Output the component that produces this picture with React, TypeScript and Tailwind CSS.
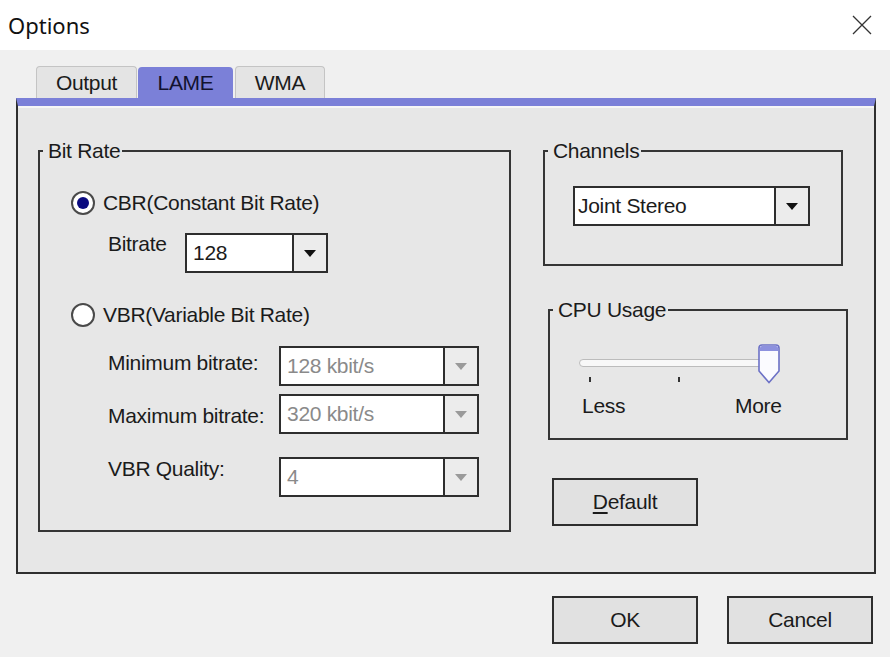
import React from 'react';

const Arrow: React.FC<{ disabled?: boolean }> = ({ disabled }) => (
  <svg width="12" height="7" viewBox="0 0 12 7">
    <path d="M0 0 H12 L6 7 Z" fill={disabled ? '#9a9a9a' : '#111'} />
  </svg>
);

interface ComboProps {
  value: string;
  className: string;
  textClass?: string;
  disabled?: boolean;
}

const Combo: React.FC<ComboProps> = ({ value, className, textClass, disabled }) => (
  <div className={`flex h-[40px] border-2 border-[#2e2e2e] bg-white ${className}`}>
    <span className={`flex-1 flex items-center ${textClass || 'pl-[6px]'} ${disabled ? 'text-[#8a8a8a]' : 'text-[#1b1b1b]'}`}>
      {value}
    </span>
    <div className="w-[34px] border-l-2 border-[#2e2e2e] bg-[#ececec] flex items-center justify-center">
      <Arrow disabled={disabled} />
    </div>
  </div>
);

const Radio: React.FC<{ checked?: boolean; label: string }> = ({ checked, label }) => (
  <div className="flex items-center h-[24px]">
    <div className="w-[24px] h-[24px] rounded-full border-2 border-[#4a4a4a] bg-white flex items-center justify-center">
      {checked && <div className="w-[12px] h-[12px] rounded-full bg-[#0a0a80]" />}
    </div>
    <span className="ml-[8px]">{label}</span>
  </div>
);

const Legend: React.FC<{ children: React.ReactNode }> = ({ children }) => (
  <legend className="ml-[3px] pl-[5px] pr-[2px] leading-[22px]">{children}</legend>
);

const Button: React.FC<{ children: React.ReactNode; className?: string }> = ({ children, className }) => (
  <button className={`w-[146px] h-[48px] border-2 border-[#2e2e2e] bg-[#e1e1e1] flex items-center justify-center ${className || ''}`}>
    {children}
  </button>
);

export default function App() {
  return (
    <div className="w-[890px] h-[657px] overflow-hidden bg-[#f0f0f0] flex flex-col font-['Liberation_Sans',Arial,sans-serif] text-[21px] leading-[22px] tracking-[-0.3px] text-[#1b1b1b]">
      {/* title bar */}
      <div className="h-[50px] shrink-0 bg-white flex items-center justify-between pl-[8px] pr-[18px]">
        <span className="font-['Noto_Sans',sans-serif] text-[22px] tracking-normal text-[#111]">Options</span>
        <svg width="20" height="20" viewBox="0 0 20 20">
          <path d="M1 1 L19 19 M19 1 L1 19" stroke="#333" strokeWidth="1.3" />
        </svg>
      </div>

      <div className="flex flex-col pl-[16px] pt-[16px]">
        {/* tabs */}
        <div className="flex items-end h-[32px] pl-[20px]">
          <div className="w-[101px] h-[32px] rounded-t-[4px] border border-b-0 border-[#c4c4c4] bg-[#e4e4e4] flex items-center justify-center">
            Output
          </div>
          <div className="ml-[1px] w-[95px] h-[31px] rounded-t-[4px] bg-[#7b80d8] flex items-center justify-center text-[#121230]">
            LAME
          </div>
          <div className="ml-[2px] w-[90px] h-[32px] rounded-t-[4px] border border-b-0 border-[#c4c4c4] bg-[#e4e4e4] flex items-center justify-center">
            WMA
          </div>
        </div>

        {/* panel */}
        <div className="w-[860px] h-[476px] border-2 border-[#2f2f2f] border-t-[8px] border-t-[#7b80d8] bg-[#e7e7e7]">
          <div className="h-full border-t-2 border-[#f6f6f6] flex items-start">
            {/* Bit Rate */}
            <fieldset className="ml-[20px] mt-[32px] w-[473px] h-[392px] border-2 border-[#353535]">
              <Legend>Bit Rate</Legend>
              <div className="flex flex-col pl-[31px] pt-[29px]">
                <Radio checked label="CBR(Constant Bit Rate)" />
                <div className="flex items-start mt-[18px]">
                  <span className="ml-[37px] w-[77px]">Bitrate</span>
                  <Combo value="128" className="w-[143px]" />
                </div>
                <div className="mt-[30px]">
                  <Radio label="VBR(Variable Bit Rate)" />
                </div>
                <div className="flex items-start mt-[19px]">
                  <span className="ml-[37px] w-[171px] mt-[6px]">Minimum bitrate:</span>
                  <Combo value="128 kbit/s" className="w-[200px]" disabled />
                </div>
                <div className="flex items-start mt-[8px]">
                  <span className="ml-[37px] w-[171px] mt-[11px]">Maximum bitrate:</span>
                  <Combo value="320 kbit/s" className="w-[200px]" disabled />
                </div>
                <div className="flex items-start mt-[23px]">
                  <span className="ml-[37px] w-[171px] mt-[1px]">VBR Quality:</span>
                  <Combo value="4" className="w-[200px]" disabled />
                </div>
              </div>
            </fieldset>

            {/* right column */}
            <div className="ml-[32px] mt-[32px] flex flex-col items-start">
              <fieldset className="w-[300px] h-[126px] border-2 border-[#353535]">
                <Legend>Channels</Legend>
                <div className="pl-[28px] pt-[24px]">
                  <Combo value="Joint Stereo" className="w-[237px]" textClass="pl-[3px]" />
                </div>
              </fieldset>

              <fieldset className="ml-[5px] mt-[33px] w-[300px] h-[141px] border-2 border-[#353535]">
                <Legend>CPU Usage</Legend>
                <div className="pl-[25px] pt-[23px] flex flex-col">
                  <div className="relative w-[210px] h-[40px]">
                    <div className="absolute left-[4px] top-[15px] w-[188px] h-[8px] rounded-full border border-[#bcbcbc] bg-[#f8f8f8]" />
                    <div className="absolute left-[14px] top-[33px] w-[2px] h-[5px] bg-[#333]" />
                    <div className="absolute left-[103px] top-[33px] w-[2px] h-[5px] bg-[#333]" />
                    <svg className="absolute left-[183px] top-0" width="22" height="40" viewBox="0 0 22 40">
                      <path d="M4 1 H18 Q21 1 21 4 V27 L11 38.5 L1 27 V4 Q1 1 4 1 Z" fill="#fbfbff" stroke="#6c71c6" strokeWidth="1.6" />
                      <path d="M2 4 Q2 2 4 2 H18 Q20 2 20 4 V7 H2 Z" fill="#8d91de" />
                    </svg>
                  </div>
                  <div className="flex mt-[11px]">
                    <span className="ml-[7px] w-[153px]">Less</span>
                    <span>More</span>
                  </div>
                </div>
              </fieldset>

              <Button className="ml-[9px] mt-[38px]">
                <span>
                  <span className="underline underline-offset-[3px]">D</span>efault
                </span>
              </Button>
            </div>
          </div>
        </div>

        {/* bottom buttons */}
        <div className="flex mt-[22px] ml-[536px] gap-[29px]">
          <Button>OK</Button>
          <Button>Cancel</Button>
        </div>
      </div>
    </div>
  );
}
